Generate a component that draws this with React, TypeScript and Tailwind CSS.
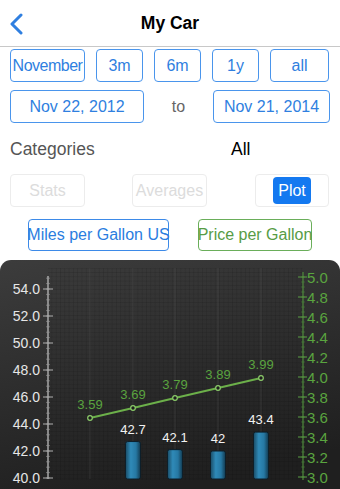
import React from 'react';

const points = [
  { x: 90, v: 3.59 },
  { x: 133, v: 3.69 },
  { x: 175, v: 3.79 },
  { x: 218, v: 3.89 },
  { x: 261, v: 3.99 },
];

const bars = [
  { x: 133, v: 42.7, label: '42.7' },
  { x: 175, v: 42.1, label: '42.1' },
  { x: 218, v: 42, label: '42' },
  { x: 261, v: 43.4, label: '43.4' },
];

const leftY = (v: number) => 218 - (v - 40) * 13.5;
const rightY = (v: number) => 17 + (5 - v) * 100;

function Chart() {
  const leftMajor = [54, 52, 50, 48, 46, 44, 42, 40];
  const leftMinor: number[] = [];
  for (let v = 40; v <= 55; v += 0.4) leftMinor.push(v);
  const rightMajor = [5.0, 4.8, 4.6, 4.4, 4.2, 4.0, 3.8, 3.6, 3.4, 3.2, 3.0];
  const rightMinor: number[] = [];
  for (let v = 3.0; v <= 5.0; v += 0.05) rightMinor.push(v);

  return (
    <svg width="340" height="230" viewBox="0 0 340 230" className="block">
      <defs>
        <linearGradient id="bg" x1="0" y1="0" x2="0.3" y2="1">
          <stop offset="0" stopColor="#3c3c3c" />
          <stop offset="1" stopColor="#1f1f1f" />
        </linearGradient>
        <pattern id="fine" width="4.3" height="4.3" patternUnits="userSpaceOnUse" x="48" y="0">
          <path d="M4.3 0V4.3H0" fill="none" stroke="#000" strokeOpacity="0.22" strokeWidth="0.8" />
        </pattern>
        <linearGradient id="bar" x1="0" y1="0" x2="1" y2="0">
          <stop offset="0" stopColor="#1a4c66" />
          <stop offset="0.35" stopColor="#2f8ab8" />
          <stop offset="0.7" stopColor="#2678a3" />
          <stop offset="1" stopColor="#123a50" />
        </linearGradient>
      </defs>
      <rect x="0" y="0" width="340" height="240" rx="11" fill="url(#bg)" />
      <rect x="48" y="8" width="255" height="212" fill="url(#fine)" />
      {points.map((p) => (
        <line key={p.x} x1={p.x} y1="8" x2={p.x} y2="219" stroke="#555" strokeOpacity="0.35" strokeWidth="1" />
      ))}

      {/* left axis */}
      <line x1="48" y1="16" x2="48" y2="219" stroke="#a8a8a8" strokeWidth="1.5" />
      {leftMinor.map((v) => (
        <line key={v} x1="46" x2="50" y1={leftY(v)} y2={leftY(v)} stroke="#9a9a9a" strokeWidth="0.6" />
      ))}
      {leftMajor.map((v) => (
        <g key={v}>
          <line x1="43" x2="53" y1={leftY(v)} y2={leftY(v)} stroke="#b0b0b0" strokeWidth="1" />
          <text x="40" y={leftY(v) + 5} textAnchor="end" fontSize="14" fill="#e6e6e6" fontFamily="Liberation Sans, Arial, sans-serif">
            {v.toFixed(1)}
          </text>
        </g>
      ))}

      {/* right axis */}
      <line x1="303" y1="12" x2="303" y2="220" stroke="#4f8a3c" strokeWidth="1.2" />
      {rightMinor.map((v) => (
        <line key={v} x1="301" x2="305" y1={rightY(v)} y2={rightY(v)} stroke="#4f8a3c" strokeWidth="0.5" />
      ))}
      {rightMajor.map((v) => (
        <g key={v}>
          <line x1="298" x2="307" y1={rightY(v)} y2={rightY(v)} stroke="#5a9e45" strokeWidth="1" />
          <text x="307" y={rightY(v) + 5.5} fontSize="15" fill="#5aa43f" fontFamily="Liberation Sans, Arial, sans-serif">
            {v.toFixed(1)}
          </text>
        </g>
      ))}

      {/* bars */}
      {bars.map((b) => {
        const top = leftY(b.v);
        return (
          <g key={b.x}>
            <rect x={b.x - 7.5} y={top} width="15" height={219 - top} rx="2" fill="url(#bar)" stroke="#0d1f2a" strokeWidth="1" />
            <text x={b.x} y={top - 8} textAnchor="middle" fontSize="13" fill="#f2f2f2" fontFamily="Liberation Sans, Arial, sans-serif">
              {b.label}
            </text>
          </g>
        );
      })}

      {/* line */}
      <polyline
        points={points.map((p) => `${p.x},${rightY(p.v)}`).join(' ')}
        fill="none"
        stroke="#6cb04a"
        strokeWidth="2"
      />
      {points.map((p) => (
        <g key={p.x}>
          <circle cx={p.x} cy={rightY(p.v)} r="2.3" fill="#1e1e1e" stroke="#8ccc6a" strokeWidth="1.2" />
          <text x={p.x} y={rightY(p.v) - 9} textAnchor="middle" fontSize="13" fill="#5aa43f" fontFamily="Liberation Sans, Arial, sans-serif">
            {p.v.toFixed(2)}
          </text>
        </g>
      ))}
    </svg>
  );
}

export default function App() {
  const btn = 'h-[33px] flex items-center justify-center rounded-[4px] border border-[#4a95ec] text-[#2f7fe0] text-[16px] leading-none';
  return (
    <div className="w-[340px] h-[489px] overflow-hidden bg-white font-['Liberation_Sans',Arial,sans-serif]">
      <div className="relative h-[47px] border-b border-[#c8c8c8] flex items-center justify-center">
        <svg className="absolute left-[9px] top-[13px]" width="14" height="22" viewBox="0 0 14 22">
          <path d="M12 2L3 11l9 9" fill="none" stroke="#2f7fe0" strokeWidth="3" strokeLinecap="round" strokeLinejoin="round" />
        </svg>
        <span className="text-[17.5px] font-bold text-black">My Car</span>
      </div>

      <div className="flex px-[10px] gap-[11px] mt-[2px]">
        <div className={`${btn} w-[75px] tracking-[-0.5px]`}>November</div>
        <div className={`${btn} w-[47px]`}>3m</div>
        <div className={`${btn} w-[47px]`}>6m</div>
        <div className={`${btn} w-[47px]`}>1y</div>
        <div className={`${btn} w-[59px]`}>all</div>
      </div>

      <div className="flex items-center px-[10px] mt-[8px]">
        <div className={`${btn} w-[134px] h-[32px]`}>Nov 22, 2012</div>
        <div className="flex-1 text-center text-[16px] text-[#666]">to</div>
        <div className={`${btn} w-[117px] h-[32px]`}>Nov 21, 2014</div>
      </div>

      <div className="flex items-center h-[36px] mt-[8px] px-[10px]">
        <span className="text-[17.5px] text-[#555] w-[221px]">Categories</span>
        <span className="text-[17.5px] text-black">All</span>
      </div>

      <div className="flex items-center px-[10px] mt-[7px]">
        <div className="w-[75px] h-[33px] rounded-[4px] border border-[#ececec] flex items-center justify-center text-[16px] text-[#dcdcdc]">Stats</div>
        <div className="ml-[47px] w-[75px] h-[33px] rounded-[4px] border border-[#ececec] flex items-center justify-center text-[16px] text-[#dcdcdc]">Averages</div>
        <div className="ml-[48px] w-[74px] h-[33px] rounded-[4px] border border-[#ececec] flex items-center justify-center">
          <div className="w-[38px] h-[27px] rounded-[4px] bg-[#1479f0] text-white text-[16px] flex items-center justify-center">Plot</div>
        </div>
      </div>

      <div className="flex items-center mt-[12px] pl-[28px]">
        <div className="w-[141px] h-[32px] rounded-[4px] border border-[#3d8ae8] flex items-center justify-center text-[16px] text-[#2a7de0] whitespace-nowrap">Miles per Gallon US</div>
        <div className="ml-[29px] w-[114px] h-[32px] rounded-[4px] border border-[#6aae5a] flex items-center justify-center text-[16px] text-[#579c45] whitespace-nowrap">Price per Gallon</div>
      </div>

      <div className="mt-[9px] h-[230px] overflow-hidden">
        <Chart />
      </div>
    </div>
  );
}
